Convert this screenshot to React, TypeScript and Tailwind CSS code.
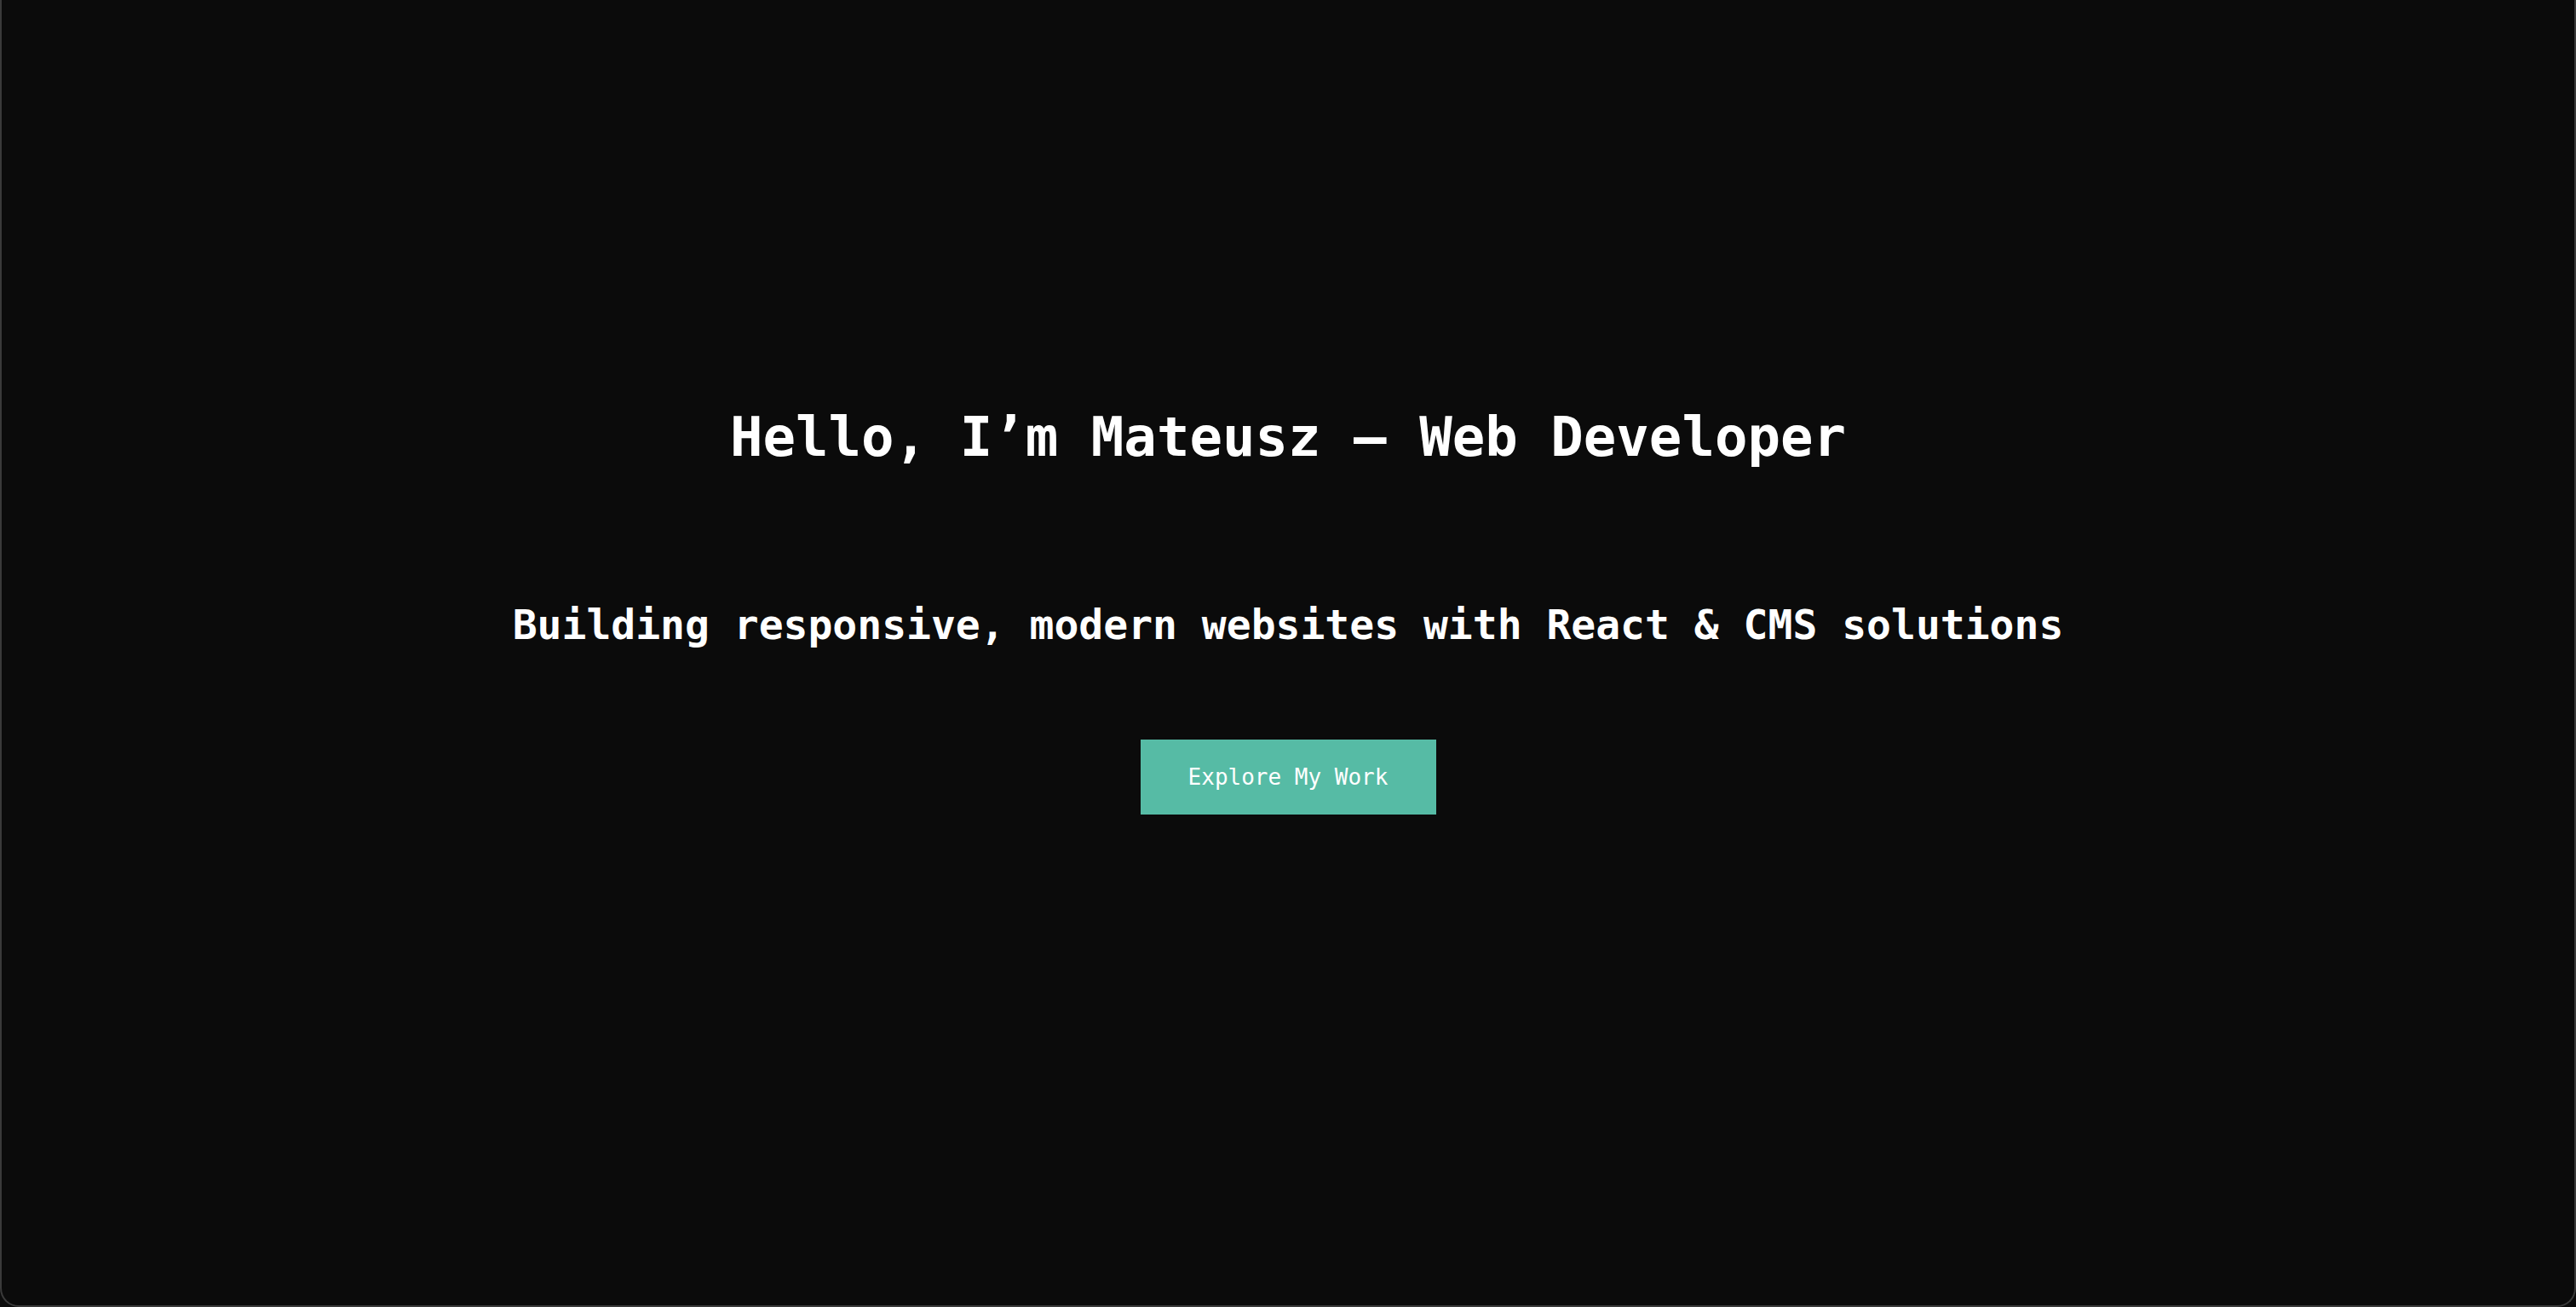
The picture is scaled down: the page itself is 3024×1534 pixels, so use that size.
export default function App() {
  return (
    <div className="h-[1534px] w-full bg-[#0c0c0c]">
      <main
        className="flex h-full w-full flex-col items-center rounded-b-[22px] border-x-2 border-b-2 border-[#3a3a3a] bg-[#0b0b0b] pt-[481px] text-white"
        style={{ fontFamily: '"DejaVu Sans Mono", "Liberation Mono", monospace' }}
      >
        <h1 className="text-[64px] leading-none font-bold">Hello, I’m Mateusz – Web Developer</h1>
        <p className="mt-[164px] text-[48px] leading-none font-bold">
          Building responsive, modern websites with React &amp; CMS solutions
        </p>
        <button className="mt-[111px] flex h-[88px] w-[347px] items-center justify-center bg-[#56bba5] text-[26px] text-white">
          Explore My Work
        </button>
      </main>
    </div>
  );
}
